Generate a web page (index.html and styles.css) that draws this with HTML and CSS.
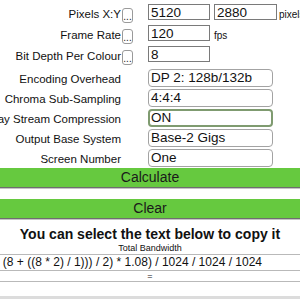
FILE: index.html
```html
<!DOCTYPE html>
<html lang="en">
<head>
    <meta charset="UTF-8">
    <title>Bandwidth Calculator</title>
<link rel="stylesheet" href="styles.css">
</head>
<body>
    <div class="form">
        <div class="row row-btn">
            <div class="label"><span>Pixels X:Y</span></div>
            <div class="more-cell"><button class="more">...</button></div>
            <div class="fields">
                <input class="num" type="text" value="5120">
                <input class="num second" type="text" value="2880">
                <span class="unit">pixels</span>
            </div>
        </div>
        <div class="row row-btn">
            <div class="label"><span>Frame Rate</span></div>
            <div class="more-cell"><button class="more">...</button></div>
            <div class="fields">
                <input class="num" type="text" value="120">
                <span class="unit fps">fps</span>
            </div>
        </div>
        <div class="row row-btn last-btn">
            <div class="label"><span>Bit Depth Per Colour</span></div>
            <div class="more-cell"><button class="more">...</button></div>
            <div class="fields">
                <input class="num" type="text" value="8">
            </div>
        </div>
        <div class="row">
            <div class="label"><span>Encoding Overhead</span></div>
            <div class="more-cell"></div>
            <div class="fields"><div class="select">DP 2: 128b/132b</div></div>
        </div>
        <div class="row">
            <div class="label"><span>Chroma Sub-Sampling</span></div>
            <div class="more-cell"></div>
            <div class="fields"><div class="select">4:4:4</div></div>
        </div>
        <div class="row">
            <div class="label"><span>Display Stream Compression</span></div>
            <div class="more-cell"></div>
            <div class="fields"><div class="select focused">ON</div></div>
        </div>
        <div class="row">
            <div class="label"><span>Output Base System</span></div>
            <div class="more-cell"></div>
            <div class="fields"><div class="select">Base-2 Gigs</div></div>
        </div>
        <div class="row last">
            <div class="label"><span>Screen Number</span></div>
            <div class="more-cell"></div>
            <div class="fields"><div class="select">One</div></div>
        </div>
    </div>

    <button class="action">Calculate</button>
    <button class="action clear">Clear</button>

    <div class="result">
        <h3>You can select the text below to copy it</h3>
        <div class="caption">Total Bandwidth</div>
        <div class="formula"><span>((((5120 * 2880 * 120 * (8 + ((8 * 2) / 1))) / 2) * 1.08) / 1024 / 1024 / 1024</span></div>
        <div class="equals">=</div>
        <div class="next"></div>
    </div>
</body>
</html>
```

FILE: styles.css
```css
* {
    box-sizing: border-box;
}

body {
    font-family: "Liberation Sans", Arial, sans-serif;
    background-color: #fff;
    color: #111;
    margin: 0;
    overflow: hidden;
}

.form {
    padding-top: 4px;
}

.row {
    display: grid;
    grid-template-columns: 121px 27px 1fr;
    height: 20px;
}

.row-btn { height: 21px; }
.last-btn { height: 23px; }
.row.last { height: 19px; }

.label {
    display: flex;
    justify-content: flex-end;
    white-space: nowrap;
    font-size: 11.5px;
    line-height: 13px;
    padding-top: 4px;
}

.more {
    display: block;
    width: 11px;
    height: 15px;
    margin: 4px 0 0 1px;
    padding: 0;
    border: 1px solid #9a9a9a;
    border-radius: 3px;
    background-color: #fff;
    font-family: inherit;
    font-size: 10px;
    line-height: 16px;
    color: #222;
}

.fields {
    display: flex;
    align-items: flex-start;
    white-space: nowrap;
}

.num {
    width: 62px;
    height: 16px;
    margin: 0;
    padding: 0 2px;
    border: 1px solid #7a7a7a;
    font-family: inherit;
    font-size: 13.5px;
    line-height: 14px;
    color: #111;
}

.num.second {
    margin-left: 4px;
    width: 63px;
}

.unit {
    font-size: 10px;
    margin-left: 2px;
    padding-top: 5px;
}

.unit.fps { margin-left: 4px; }

.select {
    width: 125px;
    height: 18px;
    padding: 0 2px;
    border: 1px solid #a3a3a3;
    border-radius: 4px;
    font-size: 13.5px;
    line-height: 16px;
    background-color: #fff;
}

.select.focused {
    border: 2px solid #7f9b70;
    padding: 0 1px;
    line-height: 14px;
}

.action {
    display: block;
    width: 100%;
    height: 20px;
    margin: 0;
    padding: 0;
    border: none;
    border-bottom: 1px solid #6e6e6e;
    box-shadow: 0 1px 0 #c4c4c4;
    background-color: #66c93f;
    font-family: inherit;
    font-size: 14px;
    line-height: 19px;
    color: #1a1a1a;
}

.clear {
    margin-top: 11px;
}

.result {
    text-align: center;
}

.result h3 {
    margin: 7px 0 0;
    font-size: 14px;
    line-height: 17px;
}

.caption {
    font-size: 9px;
    line-height: 11px;
}

.formula {
    display: flex;
    justify-content: flex-end;
    white-space: nowrap;
    padding-right: 38px;
    border-top: 1px solid #b9b9b9;
    border-bottom: 1px solid #b9b9b9;
    font-size: 12px;
    line-height: 15px;
    overflow: hidden;
}

.equals {
    border-bottom: 1px solid #b9b9b9;
    font-size: 9px;
    line-height: 10px;
}

.next {
    margin-top: 14px;
    border-top: 3px solid #dcdcdc;
}
```
